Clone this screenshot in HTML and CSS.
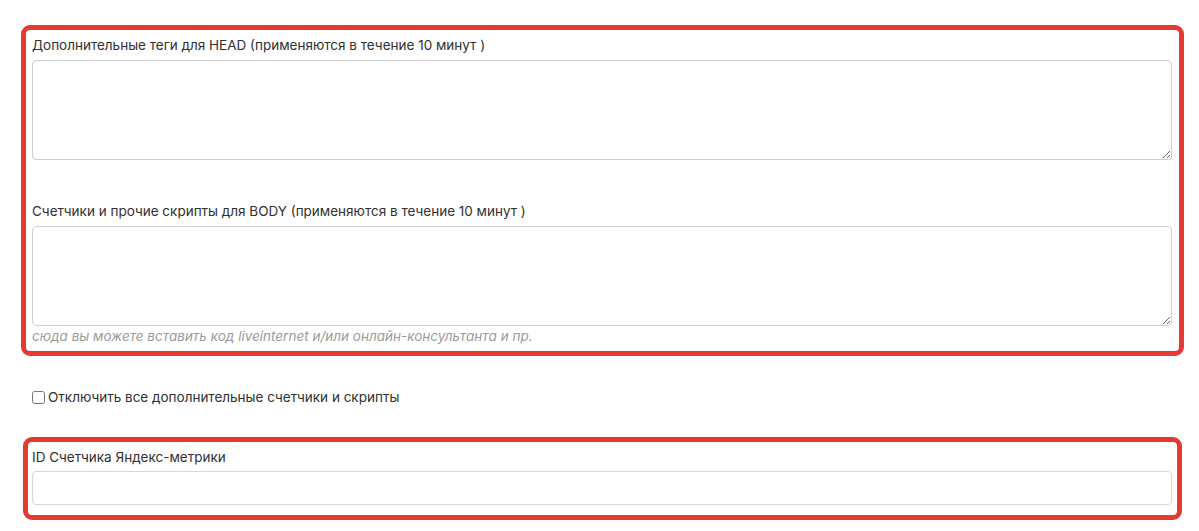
FILE: index.html
```html
<!DOCTYPE html>
<html lang="ru">
<head>
<meta charset="utf-8">
<title>Настройки счетчиков</title>
<link rel="stylesheet" href="styles.css">
</head>
<body>
<div class="page">
  <div class="mark mark-scripts">
    <div class="field field-head">
      <label class="label" for="head">Дополнительные теги для HEAD (применяются в течение 10 минут )</label>
      <textarea id="head" class="textarea"></textarea>
    </div>
    <div class="field field-body">
      <label class="label" for="body">Счетчики и прочие скрипты для BODY (применяются в течение 10 минут )</label>
      <textarea id="body" class="textarea"></textarea>
      <div class="hint">сюда вы можете вставить код liveinternet и/или онлайн-консультанта и пр.</div>
    </div>
  </div>
  <label class="check">
    <input type="checkbox" class="checkbox">
    <span>Отключить все дополнительные счетчики и скрипты</span>
  </label>
  <div class="mark mark-metrika">
    <label class="label label-tight" for="ym">ID Счетчика Яндекс-метрики</label>
    <input id="ym" type="text" class="input">
  </div>
</div>
</body>
</html>
```

FILE: styles.css
```css
* { box-sizing: border-box; }
html, body { margin: 0; padding: 0; background: #fff; }
body {
  font-family: Inter, "Noto Sans", "Liberation Sans", sans-serif;
  font-size: 13.5px;
  line-height: 20px;
  color: #303030;
}
.page {
  padding-top: 25px;
  display: flex;
  flex-direction: column;
  align-items: flex-start;
}
.mark {
  border: 5px solid #e53a32;
  border-radius: 9px;
  display: flex;
  flex-direction: column;
}
.mark-scripts {
  margin-left: 21px;
  width: 1163px;
  padding: 5px 7px 5px 6px;
}
.field { display: flex; flex-direction: column; }
.field-body { margin-top: 41px; }
.label {
  display: block;
  margin-bottom: 5px;
}
.label-tight { margin-bottom: 4px; }
.textarea {
  display: block;
  width: 100%;
  height: 100px;
  border: 1px solid #cfcfcf;
  border-radius: 4px;
  background: #fff;
  font: inherit;
  padding: 6px 12px;
  margin: 0;
}
.hint {
  font-style: italic;
  color: #9a9a9a;
}
.check {
  margin: 31px 0 0 32px;
  display: flex;
  align-items: center;
  gap: 2px;
}
.checkbox {
  width: 13px;
  height: 13px;
  margin: 0 1px 0 0;
}
.mark-metrika {
  margin: 30px 0 0 23px;
  width: 1159px;
  padding: 5px 5px 10px 4px;
}
.input {
  display: block;
  width: 100%;
  height: 34px;
  border: 1px solid #d6d6d6;
  border-radius: 4px;
  background: #fff;
  font: inherit;
  padding: 6px 12px;
  margin: 0;
}
```
